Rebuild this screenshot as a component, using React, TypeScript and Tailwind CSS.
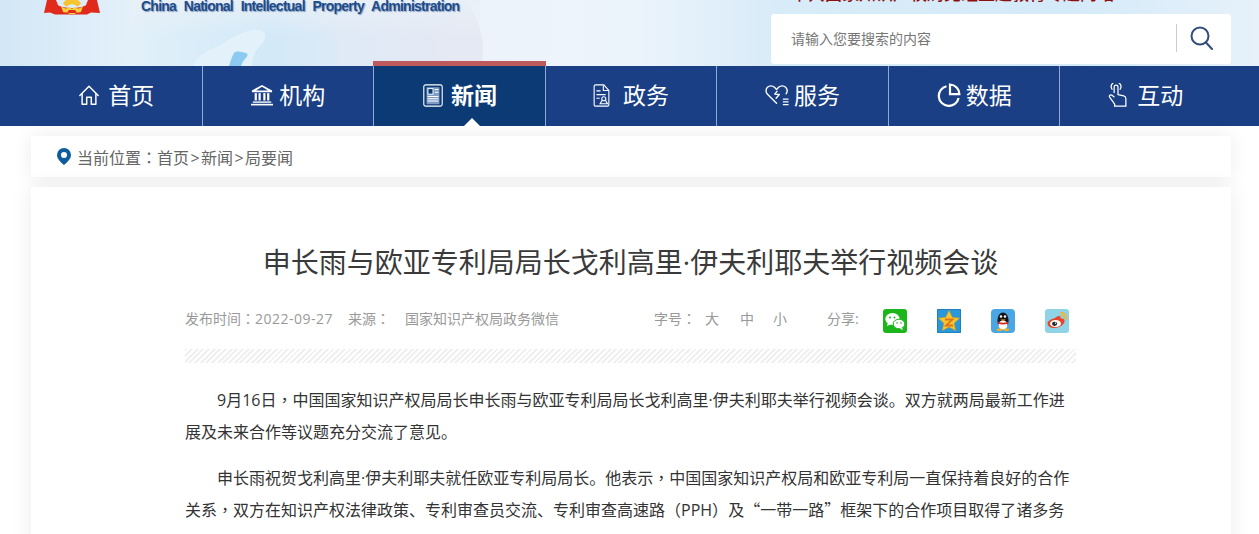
import type { ReactNode } from 'react';

const stroke = { fill: 'none', stroke: 'currentColor', strokeWidth: 1.6, strokeLinecap: 'round', strokeLinejoin: 'round' } as const;

function HomeIcon() {
  return (
    <svg width="22" height="22" viewBox="0 0 24 24" {...stroke}>
      <path d="M2 12.500 12 2.500l10 10" />
      <path d="M4.500 10.500V22h5v-7.500h5V22h5V10.500" />
    </svg>
  );
}

function BankIcon() {
  return (
    <svg width="24" height="22" viewBox="0 0 26 24" fill="currentColor">
      <path d="M13 1 2 7v2h22V7L13 1Zm0 2 6.500 4h-13L13 3Z" />
      <rect x="5" y="10" width="2.400" height="8" />
      <rect x="9.200" y="10" width="2.400" height="8" />
      <rect x="14.400" y="10" width="2.400" height="8" />
      <rect x="18.600" y="10" width="2.400" height="8" />
      <rect x="3" y="19" width="20" height="1.500" />
      <rect x="1" y="21.600" width="24" height="1.800" />
    </svg>
  );
}

function NewsIcon() {
  return (
    <svg width="22" height="23" viewBox="0 0 22 25">
      <rect x="1" y="1" width="20" height="23" rx="2" fill="none" stroke="currentColor" strokeWidth="1.200" />
      <rect x="4" y="3.500" width="14" height="18.500" fill="#7f9cc4" />
      <rect x="5.500" y="5" width="5.500" height="6" fill="#0c3a75" stroke="#fff" strokeWidth="1" />
      <path d="M13 6h4M13 9h4M5 13.500h12M5 16h12M5 18.500h12" stroke="#fff" strokeWidth="1.100" />
    </svg>
  );
}

function DocIcon() {
  return (
    <svg width="17" height="23" viewBox="0 0 18 25" fill="none" stroke="currentColor" strokeWidth="1.200">
      <path d="M2.500 1h9L17 7v15.500a1.500 1.500 0 0 1-1.500 1.500h-13A1.500 1.500 0 0 1 1 22.500v-20A1.500 1.500 0 0 1 2.500 1Z" />
      <path d="M11 1.500V7h5.500M3.500 7.500H8M3.500 11.500h10M3.500 15.500H7" />
      <circle cx="11.500" cy="16" r="2.200" />
      <path d="m9.500 18-2 3.500h8l-2-3.500" />
    </svg>
  );
}

function HeartIcon() {
  return (
    <svg width="24" height="22" viewBox="0 0 26 24" fill="none" stroke="currentColor" strokeWidth="1.500" strokeLinejoin="round" strokeLinecap="round">
      <path d="M12.500 21 2.600 11.200a5.400 5.400 0 0 1 0-7.600 5.400 5.400 0 0 1 7.600 0l2.300 2.300 2.300-2.300a5.400 5.400 0 0 1 7.600 0c2 2 2.100 4.900.500 7.100" />
      <path d="m13 8-2.500 3 5 .5-3.500 4" />
      <path d="M20 16.500h5M20 19.500h5M20 22.500h5" />
    </svg>
  );
}

function PieIcon() {
  return (
    <svg width="24" height="24" viewBox="0 0 24 24" fill="none" stroke="currentColor" strokeWidth="2.200">
      <path d="M9.500 3.200A10 10 0 1 0 21.600 15" />
      <path d="M13 1.500a9.700 9.700 0 0 1 9.400 9.700H13V1.500Z" />
    </svg>
  );
}

function HandIcon() {
  return (
    <svg width="20" height="24" viewBox="0 0 20 25" fill="none" stroke="currentColor" strokeWidth="1.300" strokeLinejoin="round" strokeLinecap="round">
      <path d="M6 10V4.200a2 2 0 0 1 4 0V12l6 1.500c1.400.4 2.200 1.400 2.200 2.800V24" />
      <path d="M6 14.500 3.500 12.600c-1.600-1-3.200.7-2.200 2.200L6.500 22v2" />
      <path d="M3.800 6.500a5 5 0 1 1 8.400 0" />
      <path d="M6.500 24H18" />
    </svg>
  );
}

function WeChatIcon() {
  return (
    <svg width="24" height="24" viewBox="0 0 24 24">
      <rect width="24" height="24" rx="3" fill="#1cb51c" />
      <ellipse cx="9.500" cy="10" rx="7.200" ry="6" fill="#fff" />
      <path d="m5 14-1.200 3 3.600-1.600Z" fill="#fff" />
      <ellipse cx="16" cy="15" rx="5.800" ry="4.800" fill="#fff" stroke="#1cb51c" strokeWidth="1" />
      <path d="m19 18.500 1 2.500-3.200-1.600Z" fill="#fff" />
      <circle cx="7" cy="8.500" r="1" fill="#1cb51c" />
      <circle cx="11.500" cy="8.500" r="1" fill="#1cb51c" />
      <circle cx="14" cy="14" r=".8" fill="#1cb51c" />
      <circle cx="18" cy="14" r=".8" fill="#1cb51c" />
    </svg>
  );
}

function QzoneIcon() {
  return (
    <svg width="24" height="24" viewBox="0 0 24 24">
      <rect width="24" height="24" rx="2" fill="#2a97d8" stroke="#136ba8" />
      <path d="m12 1.500 3.200 6.800 7.300.9-5.400 5 1.500 7.300L12 18l-6.600 3.500 1.500-7.300-5.400-5 7.300-.9L12 1.500Z" fill="#f8c62c" stroke="#d99a1c" strokeWidth=".6" />
      <path d="M8 10.500h7.500L9 16.500h7" fill="none" stroke="#e2741c" strokeWidth="1.800" />
    </svg>
  );
}

function QQIcon() {
  return (
    <svg width="24" height="24" viewBox="0 0 24 24">
      <rect width="24" height="24" rx="4" fill="#4ba6e4" />
      <ellipse cx="12" cy="11.500" rx="5.600" ry="8" fill="#15151a" />
      <ellipse cx="12" cy="16" rx="4.500" ry="4.600" fill="#fff" />
      <circle cx="10" cy="7.500" r="1.200" fill="#fff" />
      <circle cx="14" cy="7.500" r="1.200" fill="#fff" />
      <path d="M9.500 10.500h5l-2.500 1.600Z" fill="#f4b01c" />
      <path d="M6.600 12.500c3 1.600 8 1.600 10.800 0l-.4 2c-3 1.200-7 1.200-10 0Z" fill="#d8281f" />
      <ellipse cx="8.500" cy="20.800" rx="3" ry="1.300" fill="#f4b01c" />
      <ellipse cx="15.500" cy="20.800" rx="3" ry="1.300" fill="#f4b01c" />
    </svg>
  );
}

function WeiboIcon() {
  return (
    <svg width="24" height="24" viewBox="0 0 24 24">
      <rect width="24" height="24" rx="3" fill="#8fd3e6" />
      <path d="M10 9c3-2.400 5-2.400 5.600-1 .3.8 0 1.600 0 1.600 2-.6 4 0 4 2.200 0 3.600-5 7.200-10 7.200-3.800 0-7-1.800-7-4.600C2.600 12 6 10 10 9Z" fill="#e6452c" />
      <ellipse cx="10.500" cy="14.500" rx="5.500" ry="3.600" fill="#fff" />
      <ellipse cx="9.600" cy="14.800" rx="2.600" ry="2.100" fill="#222" />
      <circle cx="10.500" cy="14.200" r=".7" fill="#fff" />
      <path d="M15.500 3.500a5.500 5.500 0 0 1 6 6.500M15.800 6a3 3 0 0 1 3.400 3.700" fill="none" stroke="#eeb53a" strokeWidth="1.500" strokeLinecap="round" />
    </svg>
  );
}

function BannerArt() {
  // sky, globe and continents behind the site title
  return (
    <svg className="absolute inset-0 h-full w-full" viewBox="0 0 1259 66" preserveAspectRatio="none">
      <defs>
        <linearGradient id="sky" x1="0" x2="1" y1="0" y2="0">
          <stop offset="0" stopColor="#d3e7f6" />
          <stop offset=".1" stopColor="#e3f0fa" />
          <stop offset=".4" stopColor="#edf3fa" />
          <stop offset=".5" stopColor="#ecf4fb" />
          <stop offset=".62" stopColor="#d8ebf8" />
          <stop offset=".85" stopColor="#d5eaf9" />
          <stop offset="1" stopColor="#e6f1fa" />
        </linearGradient>
        <linearGradient id="globe" x1="0" x2="1" y1="0" y2="0">
          <stop offset="0" stopColor="#e2f0f9" />
          <stop offset=".4" stopColor="#d2e9f8" />
          <stop offset=".62" stopColor="#dfeaf6" />
          <stop offset="1" stopColor="#e6e9f3" />
        </linearGradient>
        <linearGradient id="fade" x1="0" x2="0" y1="0" y2="1">
          <stop offset="0" stopColor="#e9f0f7" stopOpacity=".9" />
          <stop offset=".55" stopColor="#e9f0f7" stopOpacity="0" />
        </linearGradient>
      </defs>
      <rect width="1259" height="66" fill="url(#sky)" />
      <ellipse cx="305" cy="50" rx="178" ry="115" fill="url(#globe)" />
      <rect x="130" width="350" height="66" fill="url(#fade)" />
      <path d="M193 66c4-10 14-16 26-20 10-6 20-14 34-16 13-2 15 6 9 14-6 6-10 12-10 22Z" fill="#e3f1fa" />
      <path d="M229 66c2-6 3-10 5-13 3-3 8-1 12 0 3 1 1 4-1 6-2 2-3 4-4 7Z" fill="#8ccaf0" />
    </svg>
  );
}

function Emblem() {
  return (
    <svg width="56" height="15" viewBox="0 0 56 15" className="ml-11 shrink-0">
      <path d="M3 0h9l2 5c4 4 24 4 28 0l2-5h9l3 13-9-.5-4 2H11l-5-2L0 13Z" fill="#df2a1c" />
      <path d="M22 0h12l3 3c-2 4-4 4-6 2l-3-1-3 1c-2 2-4 2-6-2Z" fill="#f6c52e" />
      <path d="M17 6c3 3 6 3 9 1l2 2 2-2c3 2 6 2 9-1l-2 6c-3 1-5 0-6 2h-6c-1-2-3-1-6-2Z" fill="#f8cf3c" />
      <path d="M25 10h6l2 3H23Z" fill="#df2a1c" />
    </svg>
  );
}

// comma, colon and brackets sit in the middle of the cell in the reference, as in the TC cut
function Mid({ children }: { children: ReactNode }) {
  return <span className="font-['Noto_Sans_CJK_TC',sans-serif] leading-none">{children}</span>;
}

// full width quotes
function Sc({ children }: { children: ReactNode }) {
  return <span className="font-['Noto_Sans_CJK_SC',sans-serif] leading-none">{children}</span>;
}

function Gt() {
  return <span className="inline-block w-[12px] text-center">&gt;</span>;
}

const navItems: { label: string; icon: ReactNode; gap: string; active?: boolean }[] = [
  { label: '首页', icon: <HomeIcon />, gap: 'gap-[8px]' },
  { label: '机构', icon: <BankIcon />, gap: 'gap-[5px]' },
  { label: '新闻', icon: <NewsIcon />, gap: 'gap-[7px]', active: true },
  { label: '政务', icon: <DocIcon />, gap: 'gap-[13px]' },
  { label: '服务', icon: <HeartIcon />, gap: 'gap-[5px]' },
  { label: '数据', icon: <PieIcon />, gap: 'gap-[5px]' },
  { label: '互动', icon: <HandIcon />, gap: 'gap-[9px]' },
];

function Nav() {
  return (
    <nav className="h-[60px] bg-[#1a3f85]">
      <ul className="ml-[31px] flex h-full w-[1200px]">
        {navItems.map((item, i) => (
          <li
            key={item.label}
            className={`relative flex flex-1 items-center justify-center text-white ${i < navItems.length - 1 ? 'border-r border-[#8fa9d6]' : ''} ${item.active ? 'bg-[#0c3a75]' : ''}`}
          >
            {item.active && (
              <>
                <span className="absolute -top-[5px] -left-px -right-px h-[5px] bg-[#bf5a5c]" />
                <span className="absolute bottom-0 left-[90px] border-x-[8px] border-b-[8px] border-x-transparent border-b-white" />
              </>
            )}
            <span className={`-mt-[2px] flex items-center ${item.gap}`}>
              {item.icon}
              <span className={`text-[23px] leading-none ${item.active ? 'font-bold' : ''}`}>{item.label}</span>
            </span>
          </li>
        ))}
      </ul>
    </nav>
  );
}

export default function App() {
  return (
    <div className="h-[534px] overflow-hidden bg-white font-['Open_Sans','Noto_Sans_CJK_SC',sans-serif]">
      <header className="relative h-[66px] overflow-hidden">
        <BannerArt />
        <div className="relative flex items-start">
          <Emblem />
          <p className="-mt-[2px] ml-[41px] font-['Liberation_Sans',sans-serif] text-[14px] leading-[17px] font-bold tracking-[-0.75px] whitespace-nowrap text-[#1c4c8c] [word-spacing:4.5px] [text-shadow:1px_1px_1px_#8aa0bd]">
            China National Intellectual Property Administration
          </p>
          <div className="mr-[28px] ml-auto flex w-[460px] flex-col">
            <p className="-mt-[19px] ml-[20px] text-[17px] leading-[26px] font-medium whitespace-nowrap text-[#8c1010]">
              中共国家知识产权局党组主题教育专题网站
            </p>
            <div className="mt-[7px] flex h-[50px] items-center rounded-[3px] bg-white pr-[18px] pl-[20px]">
              <span className="-mt-[2px] flex-1 text-[14px] text-[#777]">请输入您要搜索的内容</span>
              <span className="-mt-[2px] h-[28px] w-px bg-[#c5ccd6]" />
              <svg className="-mt-[2px] ml-[13px] text-[#324d7c]" width="23" height="24" viewBox="0 0 23 24" fill="none" stroke="currentColor" strokeWidth="2">
                <circle cx="10" cy="10" r="8.500" />
                <path d="m16 16.500 6 6.500" strokeLinecap="round" />
              </svg>
            </div>
          </div>
        </div>
      </header>
      <Nav />
      <main className="mt-[10px] ml-[31px] w-[1200px]">
        <div className="flex h-[41px] items-center gap-[6px] bg-white pl-[26px] text-[16px] text-[#666] shadow-[0_0_20px_rgba(0,0,0,0.08)]">
          <svg width="14" height="17" viewBox="0 0 14 17">
            <path fillRule="evenodd" d="M7 0a7 7 0 0 1 7 7c0 4-4 7.500-7 10C4 14.500 0 11 0 7a7 7 0 0 1 7-7Zm0 4a3 3 0 1 0 0 6 3 3 0 0 0 0-6Z" fill="#0f5c9c" />
          </svg>
          <span className="mt-[2px]">
            当前位置<Mid>：</Mid>首页<Gt />新闻<Gt />局要闻
          </span>
        </div>
        <article className="mt-[10px] min-h-[400px] bg-white pr-[155px] pl-[154px] shadow-[0_0_20px_rgba(0,0,0,0.08)]">
          <h1 className="pt-[53px] text-center text-[28px] leading-[44px] whitespace-nowrap text-[#3a3a3a]">
            申长雨与欧亚专利局局长戈利高里·伊夫利耶夫举行视频会谈
          </h1>
          <div className="mt-[24px] flex h-[24px] items-center text-[14px] whitespace-nowrap text-[#999]">
            <span className="-mt-[3px]">
              发布时间<Mid>：</Mid>
              <span className="tracking-[0.5px]">2022-09-27</span>
            </span>
            <span className="-mt-[3px] ml-[15px]">
              来源<Mid>：</Mid>
            </span>
            <span className="-mt-[3px] ml-[15px]">国家知识产权局政务微信</span>
            <span className="-mt-[3px] ml-[95px]">
              字号<Mid>：</Mid>
            </span>
            <span className="-mt-[3px] ml-[9px]">大</span>
            <span className="-mt-[3px] ml-[21px]">中</span>
            <span className="-mt-[3px] ml-[19px]">小</span>
            <span className="-mt-[3px] ml-[40px]">分享:</span>
            <span className="mt-[2px] ml-[24px] flex gap-[30px]">
              <WeChatIcon />
              <QzoneIcon />
              <QQIcon />
              <WeiboIcon />
            </span>
          </div>
          <div className="mt-[17px] h-[14px] bg-[repeating-linear-gradient(135deg,#f0f0f0_0,#f0f0f0_2px,#fff_2px,#fff_4px)]" />
          <div className="mt-[21px] text-[16px] leading-[32px] text-[#333]">
            <p className="indent-[2em]">
              9月16日<Mid>，</Mid>中国国家知识产权局局长申长雨与欧亚专利局局长戈利高里·伊夫利耶夫举行视频会谈。双方就两局最新工作进展及未来合作等议题充分交流了意见。
            </p>
            <p className="mt-[14px] indent-[2em]">
              申长雨祝贺戈利高里·伊夫利耶夫就任欧亚专利局局长。他表示<Mid>，</Mid>中国国家知识产权局和欧亚专利局一直保持着良好的合作关系<Mid>，</Mid>双方在知识产权法律政策、专利审查员交流、专利审查高速路<Mid>（</Mid>PPH<Mid>）</Mid>及<Sc>“</Sc>一带一路<Sc>”</Sc>框架下的合作项目取得了诸多务实成果。
            </p>
          </div>
        </article>
      </main>
    </div>
  );
}
